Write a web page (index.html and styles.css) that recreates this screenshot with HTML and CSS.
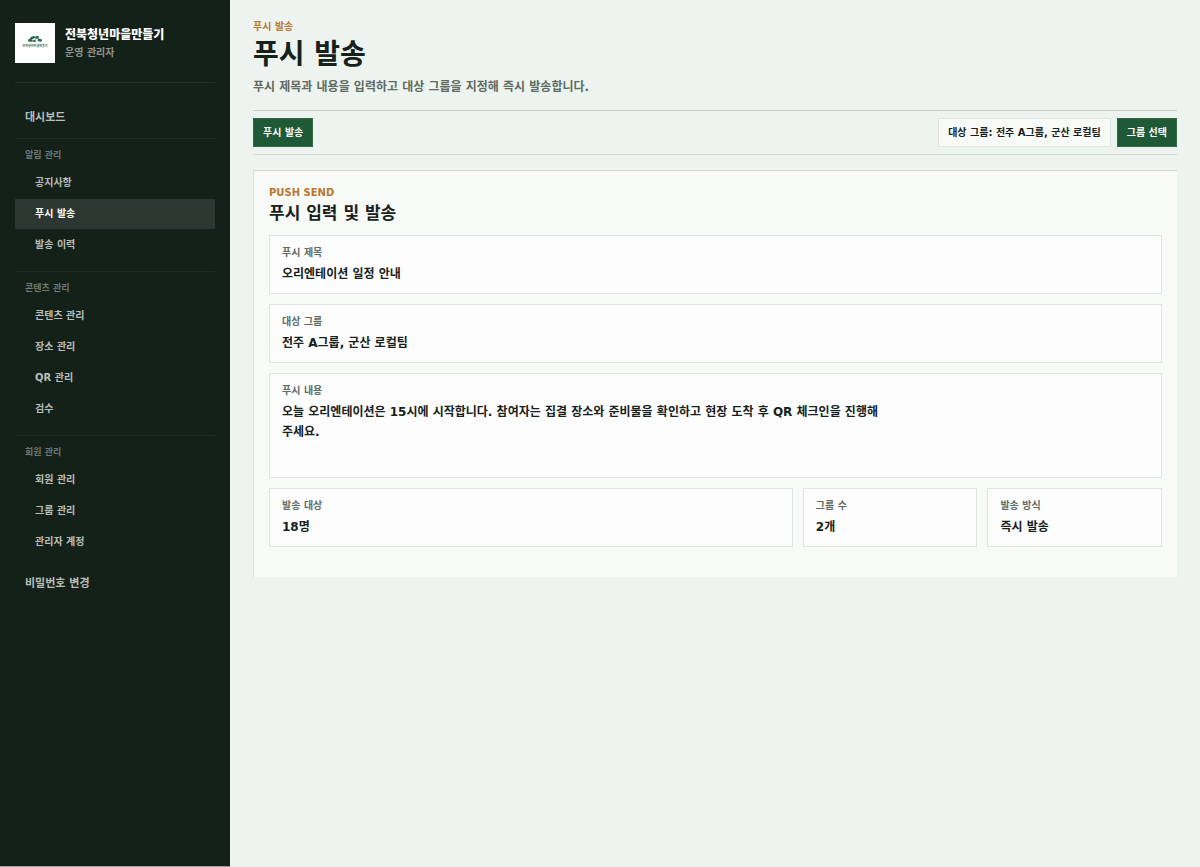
FILE: index.html
```html
<!DOCTYPE html>
<html lang="ko">
<head>
    <meta charset="UTF-8">
    <meta name="viewport" content="width=device-width, initial-scale=1.0">
    <title>푸시 발송</title>
    <link rel="stylesheet" href="styles.css">
</head>
<body>
    <div class="layout">
        <aside class="sidebar">
            <div class="brand">
                <svg class="brand-logo" viewBox="0 0 40 40" aria-hidden="true">
                    <rect width="40" height="40" fill="#ffffff"/>
                    <g fill="#2a6a52">
                        <ellipse cx="17.500" cy="14.800" rx="3" ry="1.300" transform="rotate(-22 17.500 14.800)"/>
                        <ellipse cx="22" cy="14.300" rx="2" ry="1.300" transform="rotate(-12 22 14.300)"/>
                        <ellipse cx="15.200" cy="17.400" rx="2.400" ry="1.300"/>
                        <ellipse cx="24.800" cy="17.200" rx="2.300" ry="1.400" transform="rotate(12 24.800 17.200)"/>
                        <ellipse cx="19.400" cy="18" rx="1.600" ry=".9"/>
                    </g>
                    <path d="M16 18.400c2-.2 3.400-1.200 4.600-2.200s2.400-1 3.400-.6" fill="none" stroke="#2a6a52" stroke-width=".6"/>
                    <text class="logo-text" x="20" y="23.500" text-anchor="middle" fill="#2a6a52">전북청년마을만들기</text>
                </svg>
                <div class="brand-text">
                    <strong>전북청년마을만들기</strong>
                    <span>운영 관리자</span>
                </div>
            </div>
            <nav class="nav">
                <a class="nav-main" href="#">대시보드</a>
                <div class="nav-group">
                    <p class="nav-title">알림 관리</p>
                    <a href="#">공지사항</a>
                    <a href="#" class="active" aria-current="page">푸시 발송</a>
                    <a href="#">발송 이력</a>
                </div>
                <div class="nav-group">
                    <p class="nav-title">콘텐츠 관리</p>
                    <a href="#">콘텐츠 관리</a>
                    <a href="#">장소 관리</a>
                    <a href="#">QR 관리</a>
                    <a href="#">검수</a>
                </div>
                <div class="nav-group">
                    <p class="nav-title">회원 관리</p>
                    <a href="#">회원 관리</a>
                    <a href="#">그룹 관리</a>
                    <a href="#">관리자 계정</a>
                </div>
                <a class="nav-main" href="#">비밀번호 변경</a>
            </nav>
        </aside>

        <main class="content">
            <header class="page-header">
                <p class="eyebrow">푸시 발송</p>
                <h1>푸시 발송</h1>
                <p class="description">푸시 제목과 내용을 입력하고 대상 그룹을 지정해 즉시 발송합니다.</p>
            </header>

            <div class="toolbar">
                <button type="submit" form="pushForm" class="btn">푸시 발송</button>
                <div class="toolbar-right">
                    <button type="button" class="btn btn-light">대상 그룹: 전주 A그룹, 군산 로컬팀</button>
                    <button type="button" class="btn">그룹 선택</button>
                </div>
            </div>

            <section class="panel">
                <p class="eyebrow">PUSH SEND</p>
                <h2>푸시 입력 및 발송</h2>
                <form id="pushForm" class="fields">
                    <div class="field">
                        <label for="pushTitle">푸시 제목</label>
                        <input type="text" id="pushTitle" value="오리엔테이션 일정 안내">
                    </div>
                    <div class="field">
                        <label for="pushGroup">대상 그룹</label>
                        <input type="text" id="pushGroup" value="전주 A그룹, 군산 로컬팀">
                    </div>
                    <div class="field">
                        <label for="pushBody">푸시 내용</label>
                        <textarea id="pushBody" rows="3">오늘 오리엔테이션은 15시에 시작합니다. 참여자는 집결 장소와 준비물을 확인하고 현장 도착 후 QR 체크인을 진행해 주세요.</textarea>
                    </div>
                    <div class="summary">
                        <div class="field">
                            <span>발송 대상</span>
                            <strong>18명</strong>
                        </div>
                        <div class="field">
                            <span>그룹 수</span>
                            <strong>2개</strong>
                        </div>
                        <div class="field">
                            <span>발송 방식</span>
                            <strong>즉시 발송</strong>
                        </div>
                    </div>
                </form>
            </section>
        </main>
    </div>
</body>
</html>
```

FILE: styles.css
```css
:root {
    --sidebar: #142119;
    --background: #edf3ee;
    --panel: #f8faf7;
    --text: #17211b;
    --muted: #5d6b62;
    --primary: #1f5a37;
    --accent: #b9772d;
    --line: #c8cfca;
    --line-soft: #e1e5e1;
}
* {
    box-sizing: border-box;
}
body {
    margin: 0;
    background: var(--background);
    color: var(--text);
    font-family: "DejaVu Sans", "Noto Sans CJK KR", sans-serif;
    font-size: 10px;
    font-weight: 700;
}
h1, h2, p {
    margin: 0;
}
.layout {
    display: grid;
    grid-template-columns: 230px 1fr;
    min-height: 100vh;
}
.sidebar {
    padding: 23px 15px;
    border-bottom: 1px solid #98a19b;
    background: var(--sidebar);
}
.brand {
    display: flex;
    align-items: center;
    gap: 10px;
    padding-bottom: 19px;
    border-bottom: 1px solid #27322b;
}
.brand-logo {
    width: 40px;
    height: 40px;
}
.logo-text {
    font-size: 3px;
}
.brand-text {
    display: grid;
    padding-top: 2px;
    line-height: 17px;
}
.brand-text strong {
    color: #ffffff;
    font-size: 12px;
}
.brand-text span {
    color: #8f9691;
}
.nav {
    padding-top: 20px;
}
.nav a {
    display: block;
    padding: 0 20px;
    margin-bottom: 1px;
    line-height: 30px;
    color: #b9bfbb;
    text-decoration: none;
}
.nav a.active {
    background: #2d3731;
    color: #ffffff;
}
.nav a.nav-main {
    padding: 0 10px;
    font-size: 11px;
}
.nav-group {
    margin-top: 5px;
    padding: 8px 0 6px;
    border-top: 1px solid #222d26;
}
.nav-group + .nav-group {
    margin-top: 4px;
}
.nav-group + .nav-main {
    margin-top: 5px;
}
.nav-title {
    padding: 0 10px;
    margin-bottom: 4px;
    color: #6f7872;
    font-size: 9px;
    line-height: 17px;
}
.content {
    padding: 19px 23px;
}
.eyebrow {
    color: var(--accent);
    line-height: 16px;
}
h1 {
    font-size: 28px;
    line-height: 40px;
}
.description {
    margin-top: 2px;
    color: var(--muted);
    font-size: 12px;
    line-height: 20px;
}
.toolbar {
    display: flex;
    justify-content: space-between;
    margin: 13px 0 15px;
    padding: 7px 0;
    border-top: 1px solid var(--line);
    border-bottom: 1px solid #d3d9d5;
}
.toolbar-right {
    display: flex;
    gap: 6px;
}
.btn {
    height: 29px;
    padding: 0 9px 2px;
    border: 1px solid #34694a;
    background: var(--primary);
    color: #ffffff;
    font: inherit;
    cursor: pointer;
}
.btn-light {
    border-color: var(--line-soft);
    background: var(--panel);
    color: var(--text);
}
.panel {
    padding: 14px 15px 30px;
    border-top: 1px solid #d0d6d1;
    border-left: 1px solid #dce1dd;
    background: var(--panel);
}
h2 {
    margin-bottom: 9px;
    font-size: 17px;
    line-height: 25px;
}
.fields {
    display: grid;
    gap: 10px;
}
.field {
    display: flex;
    flex-direction: column;
    min-height: 59px;
    padding: 9px 12px;
    border: 1px solid var(--line-soft);
    background: #fdfdfd;
}
.field label,
.field span {
    color: var(--muted);
    line-height: 16px;
}
.field strong,
.field input,
.field textarea {
    margin: 3px 0 0;
    padding: 0;
    border: 0;
    outline: none;
    background: none;
    color: inherit;
    font: inherit;
    font-size: 12px;
    line-height: 20px;
}
.field input {
    height: 20px;
}
.field textarea {
    max-width: 620px;
    height: 66px;
    resize: none;
    overflow: hidden;
    word-break: keep-all;
}
.summary {
    display: grid;
    grid-template-columns: 3fr 1fr 1fr;
    gap: 10px;
}
```
